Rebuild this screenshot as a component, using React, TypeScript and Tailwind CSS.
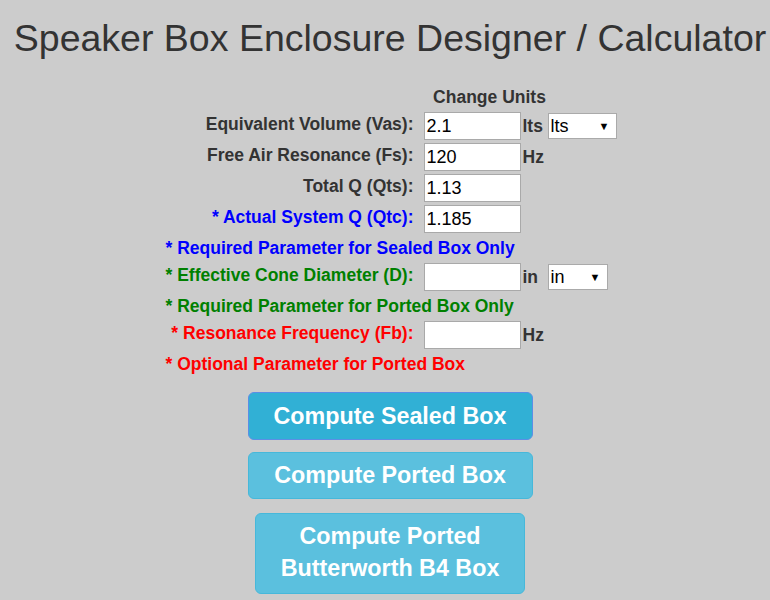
import React from "react";

const font = { fontFamily: '"Liberation Sans", Arial, sans-serif' };

function Input({ value }: { value: string }) {
  return (
    <div className="h-[28px] w-[97px] border border-[#a9a9a9] bg-white pl-[2px] text-[18px] leading-[26px] text-black">
      {value}
    </div>
  );
}

function FakeSelect({ value, w }: { value: string; w: string }) {
  return (
    <div
      className={`flex h-[26px] ${w} items-center justify-between border border-[#aaaaaa] bg-white pl-[2px] pr-[6px] text-[18px] text-black`}
    >
      <span className="leading-[24px]">{value}</span>
      <span className="text-[11px] leading-none">▼</span>
    </div>
  );
}

function Label({ children, className = "" }: { children: React.ReactNode; className?: string }) {
  return (
    <div className={`pr-[10px] pt-[2px] text-right text-[17.5px] font-bold leading-[20px] ${className}`}>
      {children}
    </div>
  );
}

function Unit({ children }: { children: React.ReactNode }) {
  return (
    <div className="flex h-[28px] items-center pl-[2px] text-[17.5px] font-bold leading-[20px]">
      {children}
    </div>
  );
}

export default function App() {
  return (
    <div className="min-h-[600px] bg-[#cccccc] pl-[10px] text-[#333333]" style={font}>
      <h1 className="pt-[18px] text-center text-[37.5px] font-normal leading-[41px]">
        Speaker Box Enclosure Designer / Calculator
      </h1>

      <div className="mx-auto mt-[26px] grid w-[453px] grid-cols-[260px_97px_27px_69px] gap-y-[3px]">
        {/* header */}
        <div />
        <div className="col-span-2 pl-[8px] text-center text-[17.5px] font-bold leading-[24px]">Change Units</div>
        <div />

        {/* Vas */}
        <Label>Equivalent Volume (Vas):</Label>
        <Input value="2.1" />
        <Unit>lts</Unit>
        <div className="flex h-[28px] items-center">
          <FakeSelect value="lts" w="w-[69px]" />
        </div>

        {/* Fs */}
        <Label>Free Air Resonance (Fs):</Label>
        <Input value="120" />
        <Unit>Hz</Unit>
        <div />

        {/* Qts */}
        <Label>Total Q (Qts):</Label>
        <Input value="1.13" />
        <div />
        <div />

        {/* Qtc */}
        <Label className="text-[#0000ff]">* Actual System Q (Qtc):</Label>
        <Input value="1.185" />
        <div />
        <div />

        <div className="col-span-4 pl-[2px] text-[17.5px] font-bold leading-[24px] text-[#0000ff]">
          * Required Parameter for Sealed Box Only
        </div>

        {/* D */}
        <Label className="text-[#008000]">* Effective Cone Diameter (D):</Label>
        <Input value="" />
        <Unit>in</Unit>
        <div className="flex h-[28px] items-center">
          <FakeSelect value="in" w="w-[60px]" />
        </div>

        <div className="col-span-4 pl-[2px] text-[17.5px] font-bold leading-[24px] text-[#008000]">
          * Required Parameter for Ported Box Only
        </div>

        {/* Fb */}
        <Label className="text-[#ff0000]">* Resonance Frequency (Fb):</Label>
        <Input value="" />
        <Unit>Hz</Unit>
        <div />

        <div className="col-span-4 pl-[2px] text-[17.5px] font-bold leading-[24px] text-[#ff0000]">
          * Optional Parameter for Ported Box
        </div>
      </div>

      <div className="mt-[16px] flex flex-col items-center">
        <button className="h-[48px] w-[285px] rounded-[6px] border border-[#5b8ee6] bg-[#31b0d5] text-[23.3px] font-bold text-white">
          Compute Sealed Box
        </button>
        <button className="mt-[12px] h-[47px] w-[285px] rounded-[6px] border border-[#46b8da] bg-[#5bc0de] text-[23.3px] font-bold text-white">
          Compute Ported Box
        </button>
        <button className="mt-[14px] h-[81px] w-[270px] rounded-[6px] border border-[#46b8da] bg-[#5bc0de] pb-[4px] text-[23.3px] font-bold leading-[32px] text-white">
          Compute Ported
          <br />
          Butterworth B4 Box
        </button>
      </div>
    </div>
  );
}
